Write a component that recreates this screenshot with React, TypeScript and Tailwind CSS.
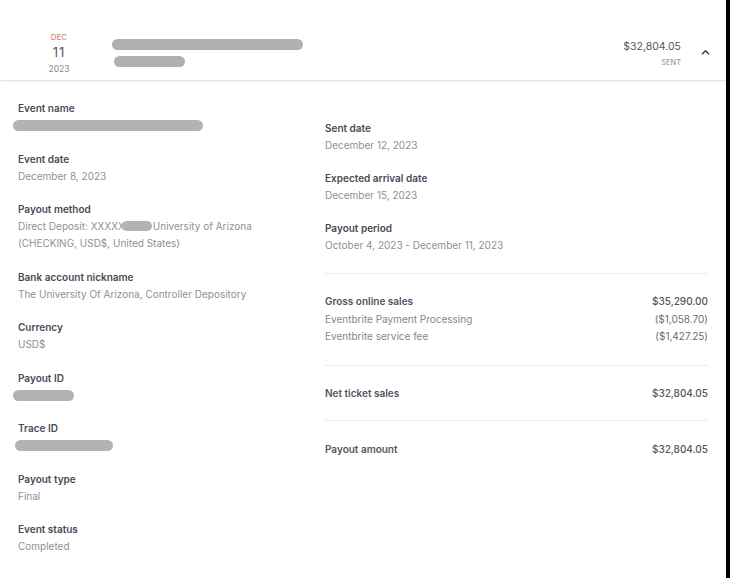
import React from "react";

const font = { fontFamily: "Inter, 'Noto Sans', sans-serif" };

function Label({ children }: { children: React.ReactNode }) {
  return <div className="text-[10px] leading-[18px] font-semibold text-[#4a4a55]">{children}</div>;
}
function Value({ children }: { children: React.ReactNode }) {
  return <div className="text-[10px] leading-[17px] text-[#8f8f98]">{children}</div>;
}
function Bar({ w, ml }: { w: string; ml: string }) {
  return (
    <div className="h-[17px] flex items-center">
      <div className={`h-[11px] rounded-full bg-[#b3b3b3] ${w} ${ml}`} />
    </div>
  );
}

function Item({ label, children }: { label: string; children: React.ReactNode }) {
  return (
    <div className="flex flex-col">
      <Label>{label}</Label>
      {children}
    </div>
  );
}

function Row({ label, amount, bold }: { label: string; amount: string; bold?: boolean }) {
  return (
    <div className="flex justify-between text-[10px] leading-[17.5px]">
      <span className={bold ? "font-semibold text-[#55555e]" : "text-[#85858e]"}>{label}</span>
      <span className={bold ? "text-[#55555e] font-medium" : "text-[#6b6b73]"}>{amount}</span>
    </div>
  );
}

export default function App() {
  return (
    <div className="w-[730px] h-[578px] flex bg-white overflow-hidden" style={font}>
      <div className="flex-1 flex flex-col">
        {/* header */}
        <div className="h-[81px] flex items-start border-b border-[#e4e4e4] shadow-[0_1px_3px_rgba(0,0,0,0.06)]">
          <div className="w-[118px] flex flex-col items-center pt-[32px]">
            <div className="text-[8px] leading-[10px] text-[#d97a66]">DEC</div>
            <div className="text-[13px] leading-[16px] text-[#55555e] mt-[2px] tracking-[1px]">11</div>
            <div className="text-[8.5px] leading-[12px] text-[#8a8a90] mt-[3px]">2023</div>
          </div>
          <div className="flex flex-col pt-[39px]">
            <div className="h-[11px] w-[191px] rounded-full bg-[#b0b0b0] -ml-[6px]" />
            <div className="h-[11px] w-[71px] rounded-full bg-[#b0b0b0] mt-[6px] -ml-[4px]" />
          </div>
          <div className="flex-1" />
          <div className="flex flex-col items-end pt-[40px]">
            <div className="text-[10.5px] leading-[14px] text-[#55555e]">$32,804.05</div>
            <div className="text-[7.5px] leading-[10px] text-[#8a8a90] mt-[4px]">SENT</div>
          </div>
          <div className="w-[45px] flex justify-center pt-[49px] pl-[3px]">
            <svg width="9" height="6" viewBox="0 0 9 6" fill="none">
              <path d="M1.5 4.8 L4.5 1.8 L7.5 4.8" stroke="#444" strokeWidth="1.6" strokeLinecap="round" strokeLinejoin="round" />
            </svg>
          </div>
        </div>
        {/* body */}
        <div className="flex flex-1">
          <div className="w-[307px] pl-[18px] pt-[18px] flex flex-col gap-[15.5px]">
            <Item label="Event name">
              <Bar w="w-[190px]" ml="-ml-[5px]" />
            </Item>
            <Item label="Event date">
              <Value>December 8, 2023</Value>
            </Item>
            <Item label="Payout method">
              <Value>
                <span>Direct Deposit: XXXXX</span>
                <span className="inline-block align-middle h-[10px] w-[30px] rounded-full bg-[#b3b3b3] -ml-[3px] mr-[1px] -mt-[2px]" />
                <span>University of Arizona</span>
              </Value>
              <Value>(CHECKING, USD$, United States)</Value>
            </Item>
            <Item label="Bank account nickname">
              <Value>The University Of Arizona, Controller Depository</Value>
            </Item>
            <Item label="Currency">
              <Value>USD$</Value>
            </Item>
            <Item label="Payout ID">
              <Bar w="w-[61px]" ml="-ml-[5px]" />
            </Item>
            <Item label="Trace ID">
              <Bar w="w-[98px]" ml="-ml-[3px]" />
            </Item>
            <Item label="Payout type">
              <Value>Final</Value>
            </Item>
            <Item label="Event status">
              <Value>Completed</Value>
            </Item>
          </div>
          <div className="flex-1 pl-[18px] pr-[18px] pt-[38px] flex flex-col">
            <div className="flex flex-col gap-[15px]">
              <Item label="Sent date">
                <Value>December 12, 2023</Value>
              </Item>
              <Item label="Expected arrival date">
                <Value>December 15, 2023</Value>
              </Item>
              <Item label="Payout period">
                <Value>October 4, 2023 - December 11, 2023</Value>
              </Item>
            </div>
            <div className="h-px bg-[#ececec] mt-[19px]" />
            <div className="pt-[19px] pb-[19px]">
              <Row label="Gross online sales" amount="$35,290.00" bold />
              <Row label="Eventbrite Payment Processing" amount="($1,058.70)" />
              <Row label="Eventbrite service fee" amount="($1,427.25)" />
            </div>
            <div className="h-px bg-[#ececec]" />
            <div className="pt-[19px] pb-[18px]">
              <Row label="Net ticket sales" amount="$32,804.05" bold />
            </div>
            <div className="h-px bg-[#ececec]" />
            <div className="pt-[20px]">
              <Row label="Payout amount" amount="$32,804.05" bold />
            </div>
          </div>
        </div>
      </div>
      <div className="w-[4px] bg-black" />
    </div>
  );
}
